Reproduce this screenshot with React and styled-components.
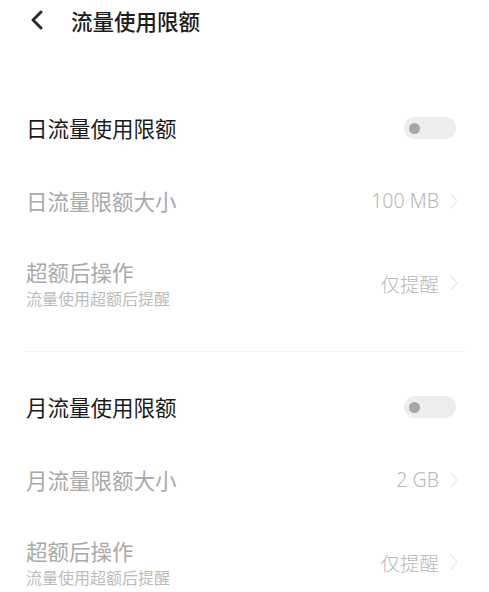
import React from "react";
import styled, { createGlobalStyle } from "styled-components";

const GlobalStyle = createGlobalStyle`
  html, body {
    margin: 0;
    padding: 0;
    background: #fff;
  }
  body {
    font-family: "Noto Sans", "Noto Sans CJK SC", sans-serif;
  }
`;

const Page = styled.div`
  width: 489px;
  min-height: 592px;
  background: #fff;
  overflow: hidden;
`;

const Header = styled.div`
  height: 40px;
  display: flex;
  align-items: center;
  padding-left: 28px;
  gap: 25px;
`;

const HeaderTitle = styled.h1`
  margin: 0;
  font-size: 21.5px;
  font-weight: 500;
  color: #1c1c1c;
  font-family: "Noto Sans CJK SC", sans-serif;
`;

const Section = styled.div`
  padding: 0 30px 0 26px;
`;

const Divider = styled.div`
  height: 1px;
  margin: 22px 24px 19px 24px;
  background: #f3f3f3;
`;

const Row = styled.div`
  height: ${(p) => p.h}px;
  display: flex;
  align-items: center;
  justify-content: space-between;
`;

const Texts = styled.div`
  display: flex;
  flex-direction: column;
  gap: 3px;
`;

const Title = styled.div`
  font-family: "Noto Sans CJK SC", sans-serif;
  font-size: 21.5px;
  line-height: 26px;
  color: ${(p) => (p.disabled ? "#a9a9a9" : "#1a1a1a")};
`;

const Sub = styled.div`
  font-family: "Noto Sans CJK SC", sans-serif;
  font-size: 16px;
  line-height: 20px;
  color: #bcbcbc;
`;

const Right = styled.div`
  display: flex;
  align-items: center;
  gap: 10px;
`;

const Value = styled.span`
  font-family: "Noto Sans", "Noto Sans CJK SC", sans-serif;
  font-size: 19.5px;
  font-weight: 300;
  color: #b8b8b8;
`;

const Toggle = styled.div`
  width: 52px;
  height: 22px;
  border-radius: 11px;
  background: #ededed;
  display: flex;
  align-items: center;
  padding-left: 5px;
  box-sizing: border-box;
  margin-right: 3px;
`;

const Knob = styled.div`
  width: 11px;
  height: 11px;
  border-radius: 50%;
  background: #a6a6a6;
`;

const Chevron = () => (
  <svg width="10" height="18" viewBox="0 0 10 18">
    <path d="M2 2 L8 9 L2 16" fill="none" stroke="#ebebeb" strokeWidth="1.5" strokeLinecap="round" strokeLinejoin="round" />
  </svg>
);

const BackIcon = () => (
  <svg width="18" height="22" viewBox="0 0 18 22">
    <path d="M13 3 L5 11 L13 19" fill="none" stroke="#2a2a2a" strokeWidth="3" strokeLinecap="round" strokeLinejoin="round" />
  </svg>
);

const LimitSection = ({ title, sizeLabel, size }) => (
  <Section>
    <Row h={72}>
      <Title>{title}</Title>
      <Toggle>
        <Knob />
      </Toggle>
    </Row>
    <Row h={73}>
      <Title disabled>{sizeLabel}</Title>
      <Right>
        <Value>{size}</Value>
        <Chevron />
      </Right>
    </Row>
    <Row h={92}>
      <Texts>
        <Title disabled>超额后操作</Title>
        <Sub>流量使用超额后提醒</Sub>
      </Texts>
      <Right>
        <Value>仅提醒</Value>
        <Chevron />
      </Right>
    </Row>
  </Section>
);

const Spacer = styled.div`
  height: 52px;
`;

export default function App() {
  return (
    <Page>
      <GlobalStyle />
      <Header>
        <BackIcon />
        <HeaderTitle>流量使用限额</HeaderTitle>
      </Header>
      <Spacer />
      <LimitSection title="日流量使用限额" sizeLabel="日流量限额大小" size="100 MB" />
      <Divider />
      <LimitSection title="月流量使用限额" sizeLabel="月流量限额大小" size="2 GB" />
    </Page>
  );
}
